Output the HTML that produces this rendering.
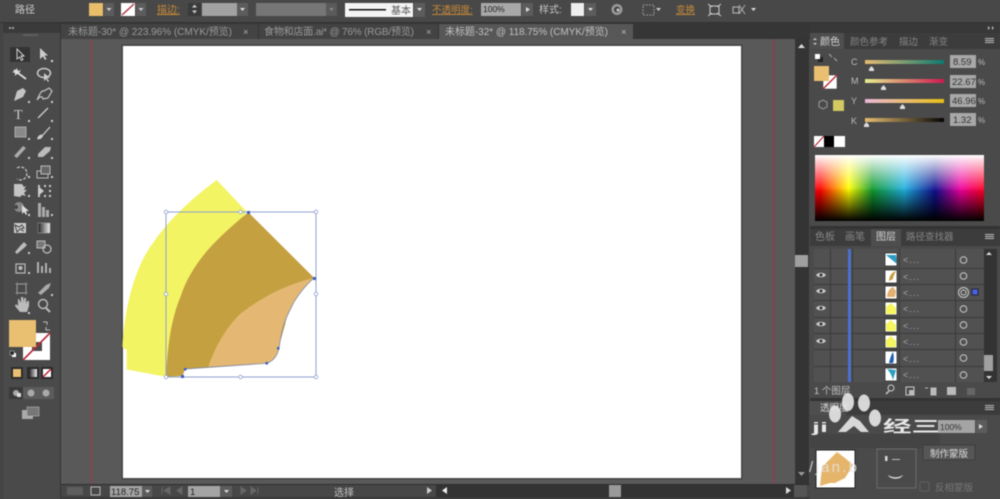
<!DOCTYPE html>
<html><head><meta charset="utf-8"><style>
html,body{margin:0;padding:0;background:#4a4a4a;width:1000px;height:499px;overflow:hidden}
svg{display:block;position:absolute;left:0;top:0;filter:blur(.4px)}
text{font-family:"Liberation Sans","Noto Sans CJK SC",sans-serif;fill:#c4c4c4;font-size:9.5px}
</style></head><body>
<svg width="1000" height="499" viewBox="0 0 1000 499" xmlns="http://www.w3.org/2000/svg">
<defs>
<linearGradient id="h" x1="0" x2="1" y1="0" y2="0"><stop offset="0" stop-color="#ff0010"/><stop offset=".03" stop-color="#ff0000"/><stop offset=".2" stop-color="#ffff00"/><stop offset=".34" stop-color="#109a30"/><stop offset=".53" stop-color="#20b0e0"/><stop offset=".71" stop-color="#10108f"/><stop offset=".86" stop-color="#f000a0"/><stop offset="1" stop-color="#ff0020"/></linearGradient>
<linearGradient id="w" x1="0" x2="0" y1="0" y2="1"><stop offset="0" stop-color="#fff"/><stop offset=".1" stop-color="#fff" stop-opacity=".8"/><stop offset=".55" stop-color="#fff" stop-opacity="0"/></linearGradient>
<linearGradient id="b" x1="0" x2="0" y1="0" y2="1"><stop offset=".5" stop-color="#000" stop-opacity="0"/><stop offset="1" stop-color="#000"/></linearGradient>
<linearGradient id="c1" x1="0" x2="1"><stop offset="0" stop-color="#e8bd70"/><stop offset="1" stop-color="#0c7a72"/></linearGradient>
<linearGradient id="c2" x1="0" x2="1"><stop offset="0" stop-color="#e5f090"/><stop offset="1" stop-color="#d01850"/></linearGradient>
<linearGradient id="c3" x1="0" x2="1"><stop offset="0" stop-color="#eab8d8"/><stop offset="1" stop-color="#e8c010"/></linearGradient>
<linearGradient id="c4" x1="0" x2="1"><stop offset="0" stop-color="#e8bd70"/><stop offset="1" stop-color="#050505"/></linearGradient>
<linearGradient id="gr" x1="0" x2="1"><stop offset="0" stop-color="#222"/><stop offset="1" stop-color="#eee"/></linearGradient>
</defs>

<!-- base -->
<rect width="1000" height="499" fill="#4a4a4a"/>
<rect y="0" width="1000" height="22" fill="#484848"/>
<rect y="22" width="1000" height="1" fill="#333"/>
<rect x="61" y="23" width="749" height="16" fill="#363636"/>
<rect x="0" y="23" width="60" height="476" fill="#484848"/>
<rect x="3" y="23" width="57" height="476" fill="#4a4a4a"/>
<rect x="60" y="23" width="1" height="476" fill="#333"/>
<rect x="3" y="23" width="57" height="10" fill="#3a3a3a"/>
<rect x="0" y="23" width="3" height="476" fill="#444"/>

<!-- tabs -->
<rect x="61" y="24" width="197" height="15" fill="#434343"/>
<rect x="258" y="24" width="181" height="15" fill="#434343"/>
<rect x="439" y="24" width="194" height="15" fill="#575757"/>
<rect x="258" y="24" width="1" height="15" fill="#333"/>
<rect x="438" y="24" width="1" height="15" fill="#333"/>
<text x="68" y="35" textLength="164" style="fill:#9a9a9a;font-size:10px">未标题-30* @ 223.96% (CMYK/预览)</text>
<text x="243" y="35" style="fill:#aaa">×</text>
<text x="264" y="35" textLength="150" style="fill:#9a9a9a;font-size:10px">食物和店面.ai* @ 76% (RGB/预览)</text>
<text x="426" y="35" style="fill:#aaa">×</text>
<text x="445" y="35" textLength="163" style="fill:#c0c0c0;font-size:10px">未标题-32* @ 118.75% (CMYK/预览)</text>
<text x="621" y="35" style="fill:#bbb">×</text>

<!-- canvas -->
<rect x="61" y="39" width="734" height="445" fill="#595959"/>
<rect x="123" y="46" width="618" height="432" fill="#fff"/>
<rect x="122" y="45" width="620" height="434" fill="none" stroke="#404040" stroke-width="1"/>
<rect x="91" y="39" width="1" height="445" fill="#a0384a"/>
<rect x="772.5" y="39" width="1.4" height="445" fill="#8c3f4d"/>

<!-- art -->
<path d="M216.7 180 L246.7 211.7 L190 300 L166 376.7 L126.7 369.5 L126.7 350 L122.3 346.7 C125 300 138 262 153 243 C170 218 195 196 216.7 180Z" fill="#f3f463"/>
<path d="M248.3 212.3 L314 277.7 C300 290 290 300 285 325 L278.3 348.3 L266.7 363.3 L185 369 L182.7 376 L166 376.7 C168 340 172 318 180 298 C192 262 215 240 248.3 212.3Z" fill="#c4a040"/>
<path d="M314 277.7 C285 285 262 297 240 314 C226 328 216 345 208.3 366.7 L266.7 363.3 C276 360 279 352 280 342 C283 322 288 314 294 302 C300 292 306 285 314 277.7Z" fill="#e4b872"/>
<g fill="none" stroke="#8ea2cf" stroke-width="1">
<rect x="166" y="212" width="150" height="165"/>
</g>
<g fill="#fff" stroke="#8ea2cf" stroke-width=".8">
<circle cx="166" cy="212" r="1.8"/><circle cx="240.5" cy="212" r="1.8"/><circle cx="316" cy="212" r="1.8"/>
<circle cx="166" cy="294" r="1.8"/><circle cx="316" cy="294" r="1.8"/>
<circle cx="166" cy="377" r="1.8"/><circle cx="240.5" cy="377" r="1.8"/><circle cx="316" cy="377" r="1.8"/>
</g>
<path d="M185 369 L266.7 363.3 C276 360 279 352 280 342 C283 322 288 314 294 302 C300 292 306 285 314 277.7" fill="none" stroke="#6f7fa8" stroke-width=".7"/>
<g fill="#3f5fc0">
<rect x="247" y="211" width="3" height="3"/><rect x="313" y="277" width="3" height="3"/><rect x="181" y="375" width="3" height="3"/><rect x="184" y="368" width="2.5" height="2.5"/><rect x="265.5" y="362" width="2.5" height="2.5"/><rect x="277" y="347" width="2.5" height="2.5"/>
</g>

<!-- options bar -->
<g>
<text x="15" y="13" style="font-size:10px;fill:#cfcfcf">路径</text>
<rect x="89" y="3" width="14" height="13" fill="#eabd6a"/>
<rect x="104" y="3" width="10" height="13" fill="#5c5c5c"/><path d="M106.500 8h5l-2.500 3z" fill="#ccc"/>
<rect x="121" y="3" width="14" height="13" fill="#fff"/><path d="M122 15L134 4" stroke="#b03040" stroke-width="1.400"/>
<rect x="136" y="3" width="10" height="13" fill="#5c5c5c"/><path d="M138.500 8h5l-2.500 3z" fill="#ccc"/>
<text x="157" y="13" style="font-size:10px;fill:#c88a38;text-decoration:underline">描边:</text>
<rect x="188" y="3" width="13" height="13" fill="#3a3a3a"/><path d="M192 7.500h5l-2.500-3zM192 10.500h5l-2.500 3z" fill="#ccc"/>
<rect x="202" y="3" width="35" height="13" fill="#a2a2a2"/>
<rect x="237" y="3" width="11" height="13" fill="#5c5c5c"/><path d="M240 8h5l-2.500 3z" fill="#ddd"/>
<rect x="256" y="3" width="70" height="13" fill="#767676"/>
<rect x="326" y="3" width="11" height="13" fill="#5a5a5a"/><path d="M329 8h5l-2.500 3z" fill="#888"/>
<rect x="345" y="3" width="68" height="14" fill="#f4f4f4"/>
<rect x="349" y="9" width="37" height="1.500" fill="#111"/>
<text x="391" y="14" style="font-size:10px;fill:#555">基本</text>
<rect x="414" y="3" width="11" height="14" fill="#5c5c5c"/><path d="M417 8h5l-2.500 3z" fill="#ddd"/>
<text x="432" y="13" style="font-size:9.500px;fill:#c88a38;text-decoration:underline">不透明度:</text>
<rect x="481" y="3" width="40" height="13" fill="#a8a8a8"/>
<text x="483" y="12" style="font-size:8.500px;fill:#222">100%</text>
<rect x="522" y="3" width="11" height="13" fill="#5c5c5c"/><path d="M526 7l4 2.500-4 2.500z" fill="#ddd"/>
<text x="539" y="13" style="font-size:10px;fill:#c4c4c4">样式:</text>
<rect x="571" y="3" width="13" height="13" fill="#eeeeee"/>
<rect x="585" y="3" width="11" height="13" fill="#5c5c5c"/><path d="M588 8h5l-2.500 3z" fill="#ddd"/>
<circle cx="617" cy="9.500" r="5.500" fill="#9a9a9a"/><circle cx="617" cy="9.500" r="3" fill="#444"/><circle cx="618" cy="10" r="1.500" fill="#ccc"/>
<rect x="643" y="5" width="11" height="10" fill="none" stroke="#aaa" stroke-dasharray="1.500 1.500"/><path d="M656 8h5l-2.500 3z" fill="#ccc"/>
<text x="676" y="13" style="font-size:9.500px;fill:#c88a38;text-decoration:underline">变换</text>
<path d="M710 6h9v8h-9z" fill="none" stroke="#ccc"/><path d="M708 4l4 3M721 4l-4 3M708 16l4-3M721 16l-4-3" stroke="#ccc"/>
<path d="M733 7h6v6h-6z" fill="none" stroke="#bbb"/><path d="M739 5l6 9M745 5l-6 9" stroke="#bbb" stroke-width=".8"/>
<path d="M751 8h5l-2.500 3z" fill="#ddd"/>
</g>

<!-- tools -->
<g>
<rect x="10" y="47" width="20" height="15" fill="#343434"/>
<path d="M17 49v10l2.500-2 2 3.500 1.500-1-2-3.500h3z" fill="#333" stroke="#ddd" stroke-width=".9"/>
<path d="M40 48v11l3-2.500 2 3.500 1.500-1-2-3.500h3.500z" fill="#ccc"/><rect x="51" y="60" width="2" height="2" fill="#ddd"/>
<path d="M14 70l12 9" stroke="#ddd" stroke-width="1.800"/><path d="M17 68l1 3 3-1-2 3 1 2-3-1-2 2v-3l-3-1 3-1z" fill="#ddd"/>
<ellipse cx="44" cy="73" rx="6.500" ry="4.500" fill="none" stroke="#ccc" stroke-width="1.500"/><path d="M44 73v8l2-2 2 3 1-1-2-3h3z" fill="#ccc"/>
<path d="M14 101l3-10 6-3 3 3-3 6z" fill="#c4c4c4"/><rect x="28" y="101" width="2" height="2" fill="#ccc"/>
<path d="M37 100c2-4 4-10 7-9l5-3 3 3-4 7-5 1c-1-4-4-2-6 1z" fill="none" stroke="#c4c4c4" stroke-width="1.200"/><rect x="51" y="101" width="2" height="2" fill="#ccc"/>
<text x="14" y="119" style="font-size:14px;font-family:'Liberation Serif',serif;fill:#ccc">T</text><rect x="28" y="120" width="2" height="2" fill="#ccc"/>
<path d="M38 118l10-10" stroke="#ccc" stroke-width="1.300"/><rect x="51" y="120" width="2" height="2" fill="#ccc"/>
<rect x="15" y="127" width="11" height="10" fill="#8a8a8a" stroke="#aaa"/><rect x="28" y="138" width="2" height="2" fill="#ccc"/>
<path d="M50 127l-8 9" stroke="#ccc" stroke-width="1.300"/><path d="M37 139c1-4 4-5 6-4 0 3-3 5-6 4z" fill="#ccc"/><rect x="51" y="138" width="2" height="2" fill="#ccc"/>
<path d="M14 156l9-10 3 2-9 10z" fill="#aaa"/><rect x="28" y="157" width="2" height="2" fill="#ccc"/>
<path d="M38 154l7-7h6l-1 4-7 6h-5z" fill="#bbb"/><rect x="51" y="157" width="2" height="2" fill="#ccc"/>
<path d="M17 168a6.500 6.500 0 1 1 0 11" fill="none" stroke="#ccc" stroke-width="1.200" stroke-dasharray="3 1.500"/><rect x="28" y="176" width="2" height="2" fill="#ccc"/>
<rect x="37" y="171" width="11" height="7" fill="none" stroke="#bbb"/><rect x="41" y="166" width="9" height="8" fill="#666" stroke="#bbb"/><rect x="51" y="176" width="2" height="2" fill="#ccc"/>
<path d="M14 184h8l2 3 2-1-2 4 3 0-3 3 2 3-4-1-2 2-6-1z" fill="#c4c4c4"/><rect x="28" y="195" width="2" height="2" fill="#ccc"/>
<path d="M38 185h2v2h-2zM44 185h2v2h-2zM49 185h2v2h-2zM38 195h2v2h-2zM44 195h2v2h-2zM49 195h2v2h-2zM49 190h2v2h-2z" fill="#ccc"/><path d="M38 186l6 5-6 5z" fill="#ccc"/>
<circle cx="19" cy="207" r="5" fill="#888"/><circle cx="16" cy="207" r="2" fill="#444"/><path d="M22 205v9l2-2 2 3 1-1-1-3h3z" fill="#ddd"/><rect x="28" y="214" width="2" height="2" fill="#ccc"/>
<path d="M38 203h3v14h-3zM42 207h3v10h-3zM46 210h3v7h-3z" fill="#aaa"/><rect x="51" y="214" width="2" height="2" fill="#ccc"/>
<rect x="14" y="223" width="12" height="10" fill="#ccc"/><path d="M15 225l4 2 3-2 2 3-4 1-3 3zM21 230l3 1" stroke="#444" fill="none"/>
<rect x="38" y="223" width="12" height="10" fill="url(#gr)" stroke="#aaa" stroke-width=".5"/>
<path d="M15 252l6-7 3 3-7 6zM21 245l3-3 3 3-3 3z" fill="#bbb"/><rect x="28" y="252" width="2" height="2" fill="#ccc"/>
<rect x="37" y="241" width="8" height="7" fill="#777" stroke="#bbb"/><circle cx="47" cy="249" r="4" fill="none" stroke="#bbb" stroke-width="1.300"/>
<rect x="16" y="264" width="9" height="9" fill="none" stroke="#bbb" stroke-width="1.200"/><circle cx="20.500" cy="268" r="2" fill="#bbb"/><rect x="28" y="272" width="2" height="2" fill="#ccc"/>
<path d="M38 262v11M42 266v7M46 263v10M50 268v5" stroke="#bbb" stroke-width="1.800"/>
<rect x="17" y="284" width="9" height="9" fill="none" stroke="#aaa"/><path d="M15 284h13M15 293h13M17 282v13M26 282v13" stroke="#999" stroke-width=".6"/>
<path d="M38 293l8-8 5-2-2 5-8 7z" fill="#aaa"/><rect x="51" y="294" width="2" height="2" fill="#ccc"/>
<path d="M15 306l5 6h7l2-6v-5l-2 0-1 3v-6h-2v5l-1-6h-2v6l-2-4h-1v7l-2-2z" fill="#bbb"/><rect x="28" y="312" width="2" height="2" fill="#ccc"/>
<circle cx="43" cy="304" r="4.500" fill="none" stroke="#bbb" stroke-width="1.400"/><path d="M46 308l4 4" stroke="#bbb" stroke-width="2"/>

<!-- colors -->
<rect x="23" y="333" width="27" height="27" fill="#fff"/><rect x="32" y="342" width="10" height="9" fill="#4a4a4a"/>
<path d="M23 360L50 333" stroke="#b82a3a" stroke-width="1.600"/>
<rect x="9" y="320" width="27" height="27" fill="#e9bf72"/>
<path d="M43 322l4 0 0 3M50 330l-4 0 0-3" fill="none" stroke="#bbb"/>
<rect x="12" y="353" width="4" height="4" fill="#fff"/><rect x="10" y="351" width="4" height="4" fill="#222" stroke="#ccc" stroke-width=".5"/>
<rect x="11" y="367" width="12" height="12" fill="#2c2c2c"/><rect x="13" y="369" width="8" height="8" fill="#e9bf72"/>
<rect x="27" y="367" width="12" height="12" fill="#2c2c2c"/><rect x="29" y="369" width="8" height="8" fill="url(#gr)"/>
<rect x="41" y="367" width="12" height="12" fill="#2c2c2c"/><rect x="43" y="369" width="8" height="8" fill="#fff"/><path d="M43 377l8-8" stroke="#c02030" stroke-width="1.500"/>
<rect x="9" y="387" width="14" height="12" fill="#3a3a3a"/><rect x="23" y="387" width="15" height="12" fill="#5c5c5c"/><rect x="38" y="387" width="16" height="12" fill="#5c5c5c"/>
<circle cx="16" cy="393" r="3" fill="#aaa"/><rect x="17" y="393" width="4" height="4" fill="#ddd"/>
<circle cx="31" cy="393" r="3.500" fill="#aaa"/><circle cx="46" cy="393" r="3.500" fill="#aaa"/>
<rect x="22" y="410" width="11" height="9" fill="#aaa"/><rect x="27" y="407" width="12" height="9" fill="#777" stroke="#aaa" stroke-width=".7"/>
<path d="M9 28h2M12 28h2" stroke="#bbb" stroke-width="1.400"/>
<rect x="23" y="34" width="15" height="2" fill="#5e5e5e"/>
</g>

<!-- doc scrollbars -->
<rect x="795" y="39" width="14" height="445" fill="#343434"/>
<path d="M798 48h7l-3.500-4z" fill="#ddd"/>
<rect x="795" y="255" width="13" height="12" fill="#a0a0a0"/>
<path d="M798 472h7l-3.500 4z" fill="#999"/>
<rect x="61" y="484" width="749" height="15" fill="#474747"/>
<rect x="61" y="484" width="749" height="1" fill="#2f2f2f"/>
<rect x="61" y="497" width="749" height="2" fill="#3a3a3a"/>
<rect x="67" y="487" width="16" height="8" fill="#5e5e5e"/>
<rect x="91" y="487" width="9" height="8" fill="none" stroke="#bbb"/>
<rect x="110" y="486" width="32" height="11" fill="#a4a4a4"/>
<text x="111" y="495" style="font-size:9.500px;fill:#222">118.75</text>
<rect x="142" y="486" width="10" height="11" fill="#5c5c5c"/><path d="M145 490h5l-2.500 3z" fill="#ddd"/>
<path d="M162 487v7M170 487l-6 3.500 6 3.500zM182 487l-5 3.500 5 3.500z" fill="#666" stroke="#666"/>
<rect x="188" y="486" width="32" height="11" fill="#a4a4a4"/>
<text x="190" y="495" style="font-size:9.500px;fill:#222">1</text>
<rect x="220" y="486" width="12" height="11" fill="#5c5c5c"/><path d="M224 490h5l-2.500 3z" fill="#ddd"/>
<path d="M241 487l5 3.500-5 3.500zM251 487l5 3.500-5 3.500zM258 487v7" fill="#666" stroke="#666"/>
<text x="334" y="496" style="font-size:10px;fill:#c4c4c4">选择</text>
<path d="M427 487l5 3.500-5 3.500z" fill="#ccc"/>
<rect x="436" y="485" width="358" height="12" fill="#333"/>
<path d="M447 487l-5 3.500 5 3.500z" fill="#eee"/>
<rect x="609" y="485" width="12" height="12" fill="#9a9a9a"/>
<path d="M786 487l5 3.500-5 3.500z" fill="#ddd"/>
<rect x="794" y="485" width="13" height="12" fill="#555"/>

<!-- right panel base -->
<rect x="810" y="23" width="190" height="476" fill="#4a4a4a"/>
<rect x="810" y="23" width="190" height="10" fill="#383838"/>
<path d="M988 26l2 2-2 2zM992 26l2 2-2 2z" fill="#bbb"/>

<!-- color panel -->
<rect x="810" y="33" width="190" height="16" fill="#3c3c3c"/>
<rect x="810" y="33" width="34" height="16" fill="#4e4e4e"/>
<text x="820" y="45" style="font-size:10px;fill:#d4d4d4">颜色</text>
<text x="850" y="45" style="fill:#858585;font-size:9.500px">颜色参考</text>
<text x="899" y="45" style="fill:#858585;font-size:9.500px">描边</text>
<text x="929" y="45" style="fill:#858585;font-size:9.500px">渐变</text>
<path d="M813 40l2-2 2 2zM813 43l2 2 2-2z" fill="#ccc"/>
<rect x="985" y="38" width="9" height="1" fill="#bbb"/><rect x="985" y="40" width="9" height="1" fill="#bbb"/><rect x="985" y="42" width="9" height="1" fill="#bbb"/>
<rect x="818" y="57" width="5" height="5" fill="#222"/><rect x="815" y="54" width="5" height="5" fill="#fff"/>
<path d="M829 54l3 3M834 58l3 3" stroke="#aaa"/>
<rect x="823" y="75" width="14" height="14" fill="#fff" stroke="#333" stroke-width=".5"/><path d="M823 89l14-14" stroke="#b82a3a" stroke-width="1.400"/>
<rect x="814" y="66" width="15" height="15" fill="#e9bf72"/>
<path d="M819 102l4-2 4 2v5l-4 2-4-2z" fill="none" stroke="#999"/>
<rect x="833" y="100" width="11" height="11" fill="#d3ca62"/>

<text x="851" y="65" style="font-size:9px;fill:#bbb">C</text>
<rect x="865" y="60" width="79" height="4" fill="url(#c1)"/>
<path d="M869 69l2.500-3 2.500 3v2h-5z" fill="#ddd"/>
<rect x="950" y="55" width="26" height="13" fill="#a8a8a8"/><text x="953" y="65" style="font-size:9.500px;fill:#333">8.59</text><text x="978" y="65" style="font-size:8px;fill:#bbb">%</text>
<text x="851" y="84" style="font-size:9px;fill:#bbb">M</text>
<rect x="865" y="79" width="79" height="4" fill="url(#c2)"/>
<path d="M881 88l2.500-3 2.500 3v2h-5z" fill="#ddd"/>
<rect x="950" y="75" width="26" height="13" fill="#a8a8a8"/><text x="952" y="85" style="font-size:9.500px;fill:#333">22.67</text><text x="978" y="85" style="font-size:8px;fill:#bbb">%</text>
<text x="851" y="104" style="font-size:9px;fill:#bbb">Y</text>
<rect x="865" y="99" width="79" height="4" fill="url(#c3)"/>
<path d="M900 107l2.500-3 2.500 3v2h-5z" fill="#ddd"/>
<rect x="950" y="94" width="26" height="13" fill="#a8a8a8"/><text x="952" y="104" style="font-size:9.500px;fill:#333">46.96</text><text x="978" y="104" style="font-size:8px;fill:#bbb">%</text>
<text x="851" y="124" style="font-size:9px;fill:#bbb">K</text>
<rect x="865" y="118" width="79" height="4" fill="url(#c4)"/>
<path d="M864 125l2.500-3 2.500 3v2h-5z" fill="#ddd"/>
<rect x="950" y="113" width="26" height="13" fill="#a8a8a8"/><text x="953" y="123" style="font-size:9.500px;fill:#333">1.32</text><text x="978" y="123" style="font-size:8px;fill:#bbb">%</text>

<rect x="814" y="136" width="10" height="11" fill="#fff"/><path d="M814 147l10-11" stroke="#b82a3a" stroke-width="1.200"/>
<rect x="824" y="136" width="10" height="11" fill="#000"/><rect x="834" y="136" width="11" height="11" fill="#fff"/>
<rect x="815" y="155" width="169" height="66" fill="url(#h)"/>
<rect x="815" y="155" width="169" height="66" fill="url(#w)"/>
<rect x="815" y="155" width="169" height="66" fill="url(#b)"/>
<rect x="810" y="226" width="190" height="3" fill="#333"/>

<!-- layers panel -->
<rect x="810" y="229" width="190" height="17" fill="#3c3c3c"/>
<rect x="871" y="229" width="30" height="17" fill="#4e4e4e"/>
<text x="815" y="240" style="fill:#858585;font-size:10px">色板</text>
<text x="845" y="240" style="fill:#858585;font-size:10px">画笔</text>
<text x="876" y="240" style="fill:#d4d4d4;font-size:10px">图层</text>
<text x="906" y="240" style="fill:#858585;font-size:9.500px">路径查找器</text>
<rect x="985" y="234" width="9" height="1" fill="#bbb"/><rect x="985" y="236" width="9" height="1" fill="#bbb"/><rect x="985" y="238" width="9" height="1" fill="#bbb"/>
<rect x="814" y="249" width="170" height="133" fill="#515151"/>
<rect x="984" y="249" width="13" height="133" fill="#333"/>
<rect x="984" y="355" width="9" height="16" fill="#a0a0a0"/>
<path d="M986 255h6l-3-3zM986 376h6l-3 3z" fill="#ddd"/>
<g stroke="#3a3a3a" stroke-width="1">
<path d="M814 268.500h170M814 284.500h170M814 300.500h170M814 317.500h170M814 333.500h170M814 349.500h170M814 366.500h170"/>
<path d="M830.500 249v133M852.500 249v133M899.500 249v133M955.500 249v133"/>
</g>
<rect x="848" y="249" width="3" height="133" fill="#4a70d0"/>
<g fill="#fff" stroke="#222" stroke-width=".7">
<rect x="885" y="253" width="12" height="13"/><rect x="885" y="270" width="12" height="13"/><rect x="885" y="286" width="12" height="13"/><rect x="885" y="302" width="12" height="13"/><rect x="885" y="319" width="12" height="13"/><rect x="885" y="335" width="12" height="13"/><rect x="885" y="351" width="12" height="13"/><rect x="885" y="368" width="12" height="13"/>
</g>
<path d="M886 255l10 0 1 9z" fill="#2a9cc4"/>
<path d="M889 281c0-5 3-9 7-10-2 4-3 6-3 8z" fill="#c4a040"/>
<path d="M887 297c0-5 3-9 6-10l3 4-1 6z" fill="#e4b070"/>
<path d="M886 314v-7l5-4 5 5v6z" fill="#f5f560"/><path d="M886 331v-7l5-4 5 5v6z" fill="#f5f560"/><path d="M886 347v-7l5-4 5 5v6z" fill="#f5f560"/>
<path d="M889 363c1-4 2-8 4-11 1 4 1 8 0 11z" fill="#1e5eb0"/><path d="M887 369l9 1-3 10c-1-4-3-8-6-11z" fill="#2aa0c0"/>
<text x="903" y="263" textLength="16" style="fill:#aaa;font-size:9px">&lt;...</text><text x="903" y="280" textLength="16" style="fill:#aaa;font-size:9px">&lt;...</text><text x="903" y="296" textLength="16" style="fill:#aaa;font-size:9px">&lt;...</text><text x="903" y="312" textLength="16" style="fill:#aaa;font-size:9px">&lt;...</text><text x="903" y="329" textLength="16" style="fill:#aaa;font-size:9px">&lt;...</text><text x="903" y="345" textLength="16" style="fill:#aaa;font-size:9px">&lt;...</text><text x="903" y="362" textLength="16" style="fill:#aaa;font-size:9px">&lt;...</text><text x="903" y="378" textLength="16" style="fill:#aaa;font-size:9px">&lt;...</text>
<g fill="none" stroke="#ccc" stroke-width="1">
<circle cx="963.500" cy="260" r="3.300"/><circle cx="963.500" cy="276" r="3.300"/><circle cx="963.500" cy="309" r="3.300"/><circle cx="963.500" cy="325" r="3.300"/><circle cx="963.500" cy="342" r="3.300"/><circle cx="963.500" cy="358" r="3.300"/><circle cx="963.500" cy="375" r="3.300"/>
<circle cx="963.500" cy="292.500" r="5"/><circle cx="963.500" cy="292.500" r="2.500"/>
</g>
<rect x="972" y="289" width="6" height="6" fill="#4a60e0" stroke="#112" stroke-width=".7"/>
<g fill="#ccc"><path d="M816 275c2-3 8-3 10 0-2 3-8 3-10 0z"/><path d="M816 291c2-3 8-3 10 0-2 3-8 3-10 0z"/><path d="M816 308c2-3 8-3 10 0-2 3-8 3-10 0z"/><path d="M816 324c2-3 8-3 10 0-2 3-8 3-10 0z"/><path d="M816 341c2-3 8-3 10 0-2 3-8 3-10 0z"/></g>
<g fill="#333"><circle cx="821" cy="275" r="1.500"/><circle cx="821" cy="291" r="1.500"/><circle cx="821" cy="308" r="1.500"/><circle cx="821" cy="324" r="1.500"/><circle cx="821" cy="341" r="1.500"/></g>
<text x="814" y="394" style="font-size:9.500px;fill:#c4c4c4">1 个图层</text>
<circle cx="891" cy="388" r="3" fill="none" stroke="#ccc"/><path d="M889 391l-3 3" stroke="#ccc" stroke-width="1.500"/>
<rect x="906" y="387" width="8" height="8" fill="none" stroke="#ccc"/><rect x="909" y="390" width="5" height="5" fill="#bbb"/>
<path d="M925 388h3M931 388h5v7h-5z" fill="#bbb" stroke="#bbb"/>
<rect x="947" y="387" width="9" height="8" fill="#bbb"/><rect x="967" y="388" width="8" height="7" fill="#666"/>
<rect x="810" y="398" width="190" height="3" fill="#333"/>

<!-- transparency panel -->
<rect x="810" y="401" width="190" height="14" fill="#3c3c3c"/>
<rect x="810" y="401" width="36" height="14" fill="#4e4e4e"/>
<text x="820" y="411" style="font-size:9.500px;fill:#d4d4d4">透明度</text>
<rect x="985" y="405" width="9" height="1" fill="#bbb"/><rect x="985" y="407" width="9" height="1" fill="#bbb"/><rect x="985" y="409" width="9" height="1" fill="#bbb"/>
<rect x="938" y="420" width="37" height="13" fill="#a4a4a4"/>
<text x="940" y="430" style="font-size:8.500px;fill:#333">100%</text>
<rect x="976" y="420" width="11" height="13" fill="#5c5c5c"/><path d="M979 424l4 2.500-4 2.500z" fill="#ddd"/>
<rect x="810" y="434" width="130" height="14" fill="#444"/>
<rect x="816" y="450" width="39" height="38" fill="#fff" stroke="#222"/>
<path d="M820 486l2-19 15-15 8 6 8 7-8 13-10 5-5 0z" fill="#e6b56c"/>
<rect x="877" y="449" width="39" height="39" fill="none" stroke="#6a6a6a" stroke-width="1"/>
<rect x="923" y="445" width="52" height="15" fill="#565656" stroke="#333" stroke-width=".6"/>
<text x="930" y="457" style="font-size:9.500px;fill:#ddd">制作蒙版</text>
<rect x="920" y="482" width="9" height="9" fill="none" stroke="#5e5e5e"/>
<text x="935" y="491" style="font-size:9.500px;fill:#777">反相蒙版</text>

<!-- watermark -->
<g fill="#e8e8e8" opacity=".9">
<ellipse cx="835" cy="414" rx="6" ry="8.500"/><ellipse cx="848" cy="402" rx="6" ry="9"/><ellipse cx="864" cy="403" rx="6" ry="8.500"/><ellipse cx="875" cy="418" rx="6" ry="8.500"/>
<path d="M838 432l14-16 8 5 9 11h-8l-7-6-8 6z"/>
</g>
<text x="883" y="432" textLength="57" lengthAdjust="spacingAndGlyphs" style="font-size:16px;font-weight:bold;fill:#e8e8e8">经三</text>
<text x="812" y="432" textLength="16" lengthAdjust="spacingAndGlyphs" style="font-size:14px;font-weight:bold;fill:#e8e8e8">ji</text>
<text x="809" y="472" textLength="48" style="font-size:15px;fill:#e4e4e4;opacity:.85">/jan.b</text>
<path d="M888 475c5 3 10 3 15 0-2 5-13 5-15 0z" fill="#d8d8d8"/><rect x="885" y="456" width="2.500" height="5" fill="#d8d8d8"/><rect x="892" y="459" width="8" height="1" fill="#bbb"/>
</svg>
</body></html>
